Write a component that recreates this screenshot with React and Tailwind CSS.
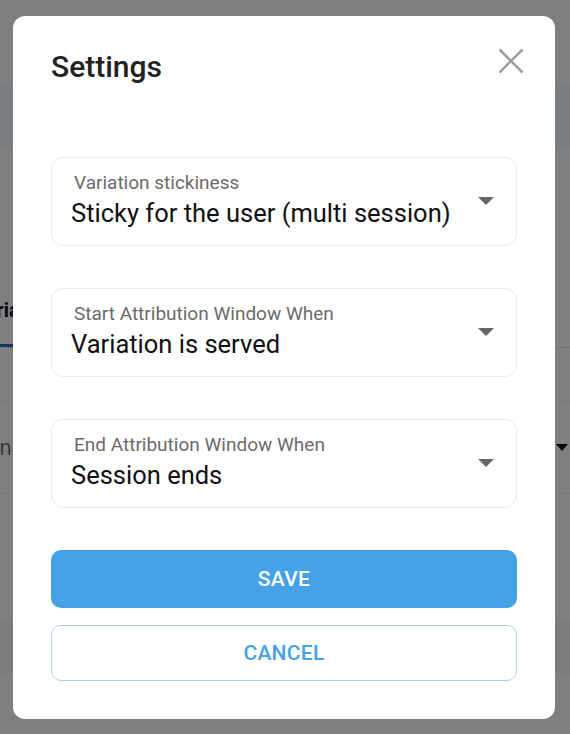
import React, { useState } from 'react'

const fields = [
  { id: 'stickiness', label: 'Variation stickiness', value: 'Sticky for the user (multi session)' },
  { id: 'start', label: 'Start Attribution Window When', value: 'Variation is served' },
  { id: 'end', label: 'End Attribution Window When', value: 'Session ends' },
]

function SelectBox({ label, value }) {
  return (
    <div className="h-[89px] rounded-[12px] border border-[#ececec] bg-white flex justify-between pl-[19px] pr-[22px]">
      <div className="flex flex-col pt-[15px]">
        <div className="pl-[3px] text-[19px] leading-[20px] text-[#6b6b6b]">{label}</div>
        <div className="mt-[6px] text-[25.5px] leading-[28px] text-[#111]">{value}</div>
      </div>
      <div className="self-center w-0 h-0 border-l-[8px] border-r-[8px] border-t-[8px] border-l-transparent border-r-transparent border-t-[#666]" />
    </div>
  )
}

function BackgroundPage() {
  return (
    <div className="h-[734px] w-[570px] bg-white overflow-hidden">
      <div className="h-[82px]" />
      <div className="h-[68px] bg-[#f3fbff]" />
      <div className="h-[146px]" />
      <div className="h-[52px] flex items-end border-b border-[#e6e6e6]">
        <div className="ml-[-27px] w-[140px] pb-[19px] border-b-[3px] border-[#1e6fb8] text-[20px] font-bold text-[#111]">Variations</div>
      </div>
      <div className="h-[54px] border-b border-[#eeeeee]" />
      <div className="h-[92px] flex items-center justify-between border-b border-[#eeeeee]">
        <div className="ml-[-64px] text-[22px] text-[#777]">Domain</div>
        <div className="mr-[2px] w-0 h-0 border-l-[6px] border-r-[6px] border-t-[7px] border-l-transparent border-r-transparent border-t-[#111]" />
      </div>
      <div className="h-[124px]" />
      <div className="h-[58px] bg-[#f6f8fa]" />
    </div>
  )
}

export default function App() {
  const [open, setOpen] = useState(true)

  return (
    <div className="relative h-[734px] w-[570px] overflow-hidden" style={{ fontFamily: 'Roboto, "Open Sans", sans-serif' }}>
      <BackgroundPage />
      {open && (
        <div className="absolute inset-0 bg-black/50 flex items-center justify-center">
          <div className="ml-[-2px] w-[542px] h-[703px] bg-white rounded-[12px] px-[38px] pt-[33px] pb-[38px] flex flex-col">
            <div className="flex items-start justify-between">
              <h2 className="text-[30px] leading-[36px] font-medium text-[#222]">Settings</h2>
              <button type="button" onClick={() => setOpen(false)} className="-mt-[1px] -mr-[7px] w-[26px] h-[26px]">
                <svg width="26" height="26" viewBox="0 0 26 26">
                  <path d="M1.5 1.5 L24.5 24.5 M24.5 1.5 L1.5 24.5" stroke="#9e9e9e" strokeWidth="2.6" fill="none" />
                </svg>
              </button>
            </div>

            <div className="mt-[72px] flex flex-col gap-[42px]">
              {fields.map(f => (
                <SelectBox key={f.id} label={f.label} value={f.value} />
              ))}
            </div>

            <button
              type="button"
              className="mt-[42px] h-[58px] pt-[3px] rounded-[10px] bg-[#45a2e6] text-white text-[21px] font-medium tracking-[0.3px]"
            >
              SAVE
            </button>
            <button
              type="button"
              onClick={() => setOpen(false)}
              className="mt-[17px] h-[56px] pt-[2px] rounded-[10px] border border-[#a8d2f3] bg-white text-[#45a2e6] text-[21px] font-medium tracking-[0.3px]"
            >
              CANCEL
            </button>
          </div>
        </div>
      )}
    </div>
  )
}
